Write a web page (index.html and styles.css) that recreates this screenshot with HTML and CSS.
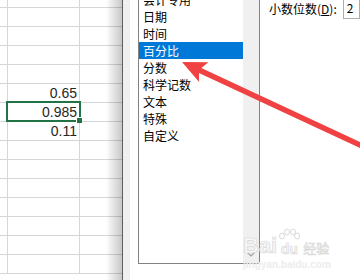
FILE: index.html
```html
<!DOCTYPE html>
<html lang="zh-CN">
<head>
    <meta charset="UTF-8" />
    <title>设置单元格格式</title>
    <link rel="stylesheet" href="styles.css">
</head>
<body>
    <div class="screen">
        <div class="sheet">
            <div class="row first"><div class="cell a"></div><div class="cell b"></div><div class="cell c"></div></div>
            <div class="row"><div class="cell a"></div><div class="cell b"></div><div class="cell c"></div></div>
            <div class="row"><div class="cell a"></div><div class="cell b"></div><div class="cell c"></div></div>
            <div class="row"><div class="cell a"></div><div class="cell b"></div><div class="cell c"></div></div>
            <div class="row"><div class="cell a"></div><div class="cell b"></div><div class="cell c"></div></div>
            <div class="row"><div class="cell a"></div><div class="cell b">0.65</div><div class="cell c"></div></div>
            <div class="row"><div class="cell a"></div><div class="cell b selected">0.985</div><div class="cell c"></div></div>
            <div class="row"><div class="cell a"></div><div class="cell b">0.11</div><div class="cell c"></div></div>
            <div class="row"><div class="cell a"></div><div class="cell b"></div><div class="cell c"></div></div>
            <div class="row"><div class="cell a"></div><div class="cell b"></div><div class="cell c"></div></div>
            <div class="row"><div class="cell a"></div><div class="cell b"></div><div class="cell c"></div></div>
            <div class="row"><div class="cell a"></div><div class="cell b"></div><div class="cell c"></div></div>
            <div class="row"><div class="cell a"></div><div class="cell b"></div><div class="cell c"></div></div>
            <div class="row"><div class="cell a"></div><div class="cell b"></div><div class="cell c"></div></div>
            <div class="row"><div class="cell a"></div><div class="cell b"></div><div class="cell c"></div></div>
        </div>

        <div class="edge"></div>

        <div class="dialog">
            <div class="listbox">
                <ul class="items">
                    <li>会计专用</li>
                    <li>日期</li>
                    <li>时间</li>
                    <li class="on">百分比</li>
                    <li>分数</li>
                    <li>科学记数</li>
                    <li>文本</li>
                    <li>特殊</li>
                    <li>自定义</li>
                </ul>
                <div class="scroll">
                    <svg class="down" width="8" height="5" viewBox="0 0 8 5">
                        <path d="M0.5 0.5 L4 4 L7.5 0.5" fill="none" stroke="#a0a0a0" stroke-width="1.2"/>
                    </svg>
                </div>
            </div>
            <div class="options">
                <div class="field">
                    <label>小数位数(<u>D</u>):</label>
                    <span class="spin">2</span>
                </div>
            </div>
        </div>

        <!-- 红色箭头 -->
        <svg class="arrow" width="360" height="280" viewBox="0 0 360 280">
            <g transform="translate(182 62) rotate(25)">
                <polygon points="0,0 24,-11 20,-2.8 230,-2.8 230,2.8 20,2.8 24,11" fill="#f04242"/>
            </g>
        </svg>

        <div class="watermark">
            <div class="logo">
                <span class="bai">Bai</span>
                <span class="paw">
                    <svg width="22" height="13" viewBox="0 0 22 13">
                        <ellipse cx="4" cy="8" rx="2.5" ry="3" fill="none" stroke="#dadada"/>
                        <ellipse cx="9" cy="4" rx="2.5" ry="3" fill="none" stroke="#dadada"/>
                        <ellipse cx="15" cy="4" rx="2.5" ry="3" fill="none" stroke="#dadada"/>
                        <ellipse cx="19" cy="8" rx="2.5" ry="3" fill="none" stroke="#dadada"/>
                    </svg>
                    <span class="du">du</span>
                </span>
                <span class="jy">经验</span>
            </div>
            <div class="site">jingyan.baidu.com</div>
        </div>
    </div>
</body>
</html>
```

FILE: styles.css
```css
body {
    margin: 0;
    background-color: #fff;
    font-family: "Noto Sans CJK SC", "Liberation Sans", sans-serif;
}

.screen {
    position: relative;
    display: flex;
    width: 360px;
    height: 280px;
    overflow: hidden;
}

/* 表格区域 */
.sheet {
    position: relative;
    flex: none;
    width: 122px;
    font-family: "Liberation Sans", sans-serif;
    font-size: 14px;
    color: #262626;
}

.sheet::after {
    content: "";
    position: absolute;
    top: 0;
    right: 0;
    bottom: 0;
    width: 16px;
    background: linear-gradient(to right, rgba(0, 0, 0, 0), rgba(0, 0, 0, 0.22));
}

.row {
    display: flex;
    height: 19px;
    box-sizing: border-box;
    border-bottom: 1px solid #d6d6d6;
}

.row.first {
    height: 8px;
}

.cell {
    height: 100%;
    box-sizing: border-box;
    border-right: 1px solid #d6d6d6;
}

.cell.a {
    width: 8px;
}

.cell.b {
    width: 72px;
    padding-right: 2px;
    text-align: right;
    line-height: 19px;
}

.cell.c {
    flex: 1;
    border-right: none;
}

.cell.selected {
    position: relative;
}

.cell.selected::before {
    content: "";
    position: absolute;
    top: -2px;
    left: -2px;
    right: -2px;
    bottom: -1px;
    border: 2px solid #217346;
}

.cell.selected::after {
    content: "";
    position: absolute;
    right: -3px;
    bottom: -2px;
    width: 5px;
    height: 5px;
    background-color: #217346;
    border-left: 1px solid #fff;
    border-top: 1px solid #fff;
}

.edge {
    flex: none;
    width: 8px;
    box-sizing: border-box;
    border-left: 1px solid #5e5e5e;
    background-color: #efefef;
}

/* 对话框 */
.dialog {
    flex: 1;
    display: flex;
    padding-left: 8px;
    background-color: #fff;
}

.listbox {
    flex: none;
    display: flex;
    width: 122px;
    height: 274px;
    margin-top: -10px;
    box-sizing: border-box;
    border: 1px solid #828282;
}

.items {
    flex: 1;
    list-style: none;
    margin: 0;
    padding: 0;
    font-size: 12px;
    color: #000;
}

.items li {
    height: 17px;
    line-height: 17px;
    padding-left: 4px;
}

.items li.on {
    background-color: #0078d7;
    color: #fff;
}

.scroll {
    width: 16px;
    display: flex;
    align-items: flex-end;
    justify-content: center;
    background-color: #f0f0f0;
}

.down {
    margin-bottom: 6px;
}

.options {
    flex: 1;
    padding-left: 9px;
}

.field {
    display: flex;
    align-items: center;
    height: 22px;
    margin-top: -3px;
    font-size: 12px;
    color: #000;
    white-space: nowrap;
}

.spin {
    flex: 1;
    height: 22px;
    margin-left: 6px;
    padding-left: 3px;
    box-sizing: border-box;
    border: 1px solid #adadad;
    line-height: 20px;
}

.arrow {
    position: absolute;
    top: 0;
    left: 0;
    pointer-events: none;
}

/* 水印 */
.watermark {
    position: absolute;
    left: 243px;
    top: 225px;
    color: #f6f6f6;
    pointer-events: none;
}

.logo {
    display: flex;
    align-items: flex-end;
    height: 32px;
}

.bai {
    font-family: "Liberation Sans", sans-serif;
    font-weight: bold;
    font-size: 22px;
    line-height: 22px;
    -webkit-text-stroke: 0.7px #d8d8d8;
}

.paw {
    display: flex;
    flex-direction: column;
    align-items: center;
    margin-left: 1px;
}

.du {
    font-family: "Liberation Sans", sans-serif;
    font-weight: bold;
    font-size: 14px;
    line-height: 16px;
    -webkit-text-stroke: 0.6px #d8d8d8;
}

.jy {
    margin-left: 3px;
    font-size: 13px;
    line-height: 18px;
    -webkit-text-stroke: 0.6px #d8d8d8;
}

.site {
    margin-top: 2px;
    font-family: "Liberation Sans", sans-serif;
    font-size: 10px;
    font-weight: bold;
    color: #ececec;
}
```
